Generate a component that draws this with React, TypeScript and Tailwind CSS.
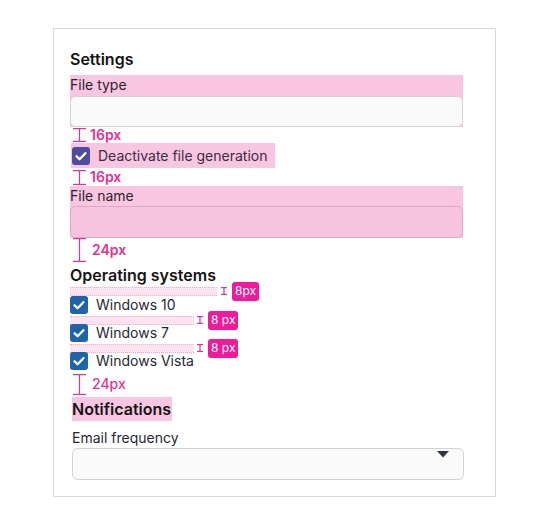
import React from "react";

function IBeam({ h, w = 13 }: { h: number; w?: number }) {
  const c = w / 2;
  return (
    <svg width={w} height={h} viewBox={`0 0 ${w} ${h}`} className="block shrink-0">
      <line x1={c} y1={0.5} x2={c} y2={h - 0.5} stroke="#e8308f" strokeWidth={1.2} />
      <line x1={0} y1={0.6} x2={w} y2={0.6} stroke="#e8308f" strokeWidth={1.2} />
      <line x1={0} y1={h - 0.6} x2={w} y2={h - 0.6} stroke="#e8308f" strokeWidth={1.2} />
    </svg>
  );
}

function Marker({ h, label, beamH, gap, medium }: { h: number; label: string; beamH: number; gap: number; medium?: boolean }) {
  return (
    <div className="flex items-center" style={{ height: h }}>
      <div className="ml-[3px]">
        <IBeam h={beamH} />
      </div>
      <span
        className={`text-[14px] leading-4 text-[#e8308f] ${medium ? "font-medium" : "font-semibold"}`}
        style={{ marginLeft: gap }}
      >
        {label}
      </span>
    </div>
  );
}

function Check({ color }: { color: string }) {
  return (
    <span
      className="flex h-[18px] w-[18px] shrink-0 items-center justify-center rounded-[3px]"
      style={{ backgroundColor: color }}
    >
      <svg width="18" height="18" viewBox="0 0 18 18">
        <polyline
          points="4.6,9.3 7.6,12.2 13.4,6.2"
          fill="none"
          stroke="#fff"
          strokeWidth="2.3"
          strokeLinecap="round"
          strokeLinejoin="round"
        />
      </svg>
    </span>
  );
}

function Strip({ width, label, mlBeam }: { width: number; label: string; mlBeam: number }) {
  return (
    <div className="flex h-[8px] items-center">
      <div
        className="h-[9px] border-y border-dotted border-[#f4a9d0] bg-[#fde3f0]"
        style={{ width }}
      />
      <div style={{ marginLeft: mlBeam }}>
        <IBeam h={8} w={6} />
      </div>
      <span className="ml-[5px] flex h-[19px] items-center rounded-[3px] bg-[#ee1b9a] px-[3px] text-[12px] leading-4 text-white">
        {label}
      </span>
    </div>
  );
}

function OsRow({ label }: { label: string }) {
  return (
    <div className="flex h-[20px] items-start">
      <Check color="#1f64a6" />
      <span className="ml-[8px] text-[14px] leading-[18px] text-[#1f2733]">{label}</span>
    </div>
  );
}

export default function App() {
  return (
    <div
      className="h-[525px] w-full bg-white pl-[53px] pt-[28px]"
      style={{ fontFamily: "Inter, 'Noto Sans', sans-serif" }}
    >
      <div className="h-[469px] w-[443px] border border-[#d9d9d9] pl-[16px] pt-[18px]">
        <h2 className="h-6 text-[16px] font-semibold leading-6 text-[#141414]">Settings</h2>

        <div className="mt-1 w-[393px] bg-[#f9c6e2]">
          <div className="h-5 text-[14px] leading-5 text-[#2b1f2e]">File type</div>
          <div className="mt-px h-[31px] rounded-[5px] border border-[#d3d3d3] bg-[#fafafa]" />
        </div>

        <Marker h={16} beamH={14} gap={4} label="16px" />

        <div className="ml-px flex h-[25px] w-[204px] items-center bg-[#f9c6e2] pl-px">
          <Check color="#4f4b9d" />
          <span className="ml-[8px] text-[14px] leading-5 text-[#3a2c42]">Deactivate file generation</span>
        </div>

        <Marker h={18} beamH={15} gap={4} label="16px" />

        <div className="w-[393px] bg-[#f9c6e2]">
          <div className="h-5 text-[14px] leading-5 text-[#2b1f2e]">File name</div>
          <div className="h-8 rounded-[5px] border border-[#dcaac6] bg-[#f6c4df]" />
        </div>

        <Marker h={24} beamH={24} gap={6} label="24px" />

        <h2 className="mt-px h-6 text-[16px] font-semibold leading-6 text-[#141414]">Operating systems</h2>
        <Strip width={147} label="8px" mlBeam={4} />
        <div className="mt-px">
          <OsRow label="Windows 10" />
        </div>
        <Strip width={124} label="8 px" mlBeam={3} />
        <OsRow label="Windows 7" />
        <Strip width={124} label="8 px" mlBeam={3} />
        <OsRow label="Windows Vista" />

        <div className="mt-px">
          <Marker h={22} beamH={21} gap={6} label="24px" medium />
        </div>

        <div className="ml-[2px] mt-[2px] flex">
          <h2 className="h-6 bg-[#f9c6e2] pr-px text-[16px] font-semibold leading-6 text-[#141414]">
            Notifications
          </h2>
        </div>

        <div className="ml-[2px] mt-[7px]">
          <div className="h-5 text-[14px] leading-5 text-[#1f2733]">Email frequency</div>
          <div className="relative h-8 w-[392px] rounded-[6px] border border-[#d3d3d3] bg-[#fafafa]">
            <svg
              width="12"
              height="7"
              viewBox="0 0 12 7"
              className="absolute right-[14px] top-[2px]"
            >
              <polygon points="0,0 12,0 6,6.5" fill="#2d3440" />
            </svg>
          </div>
        </div>
      </div>
    </div>
  );
}
